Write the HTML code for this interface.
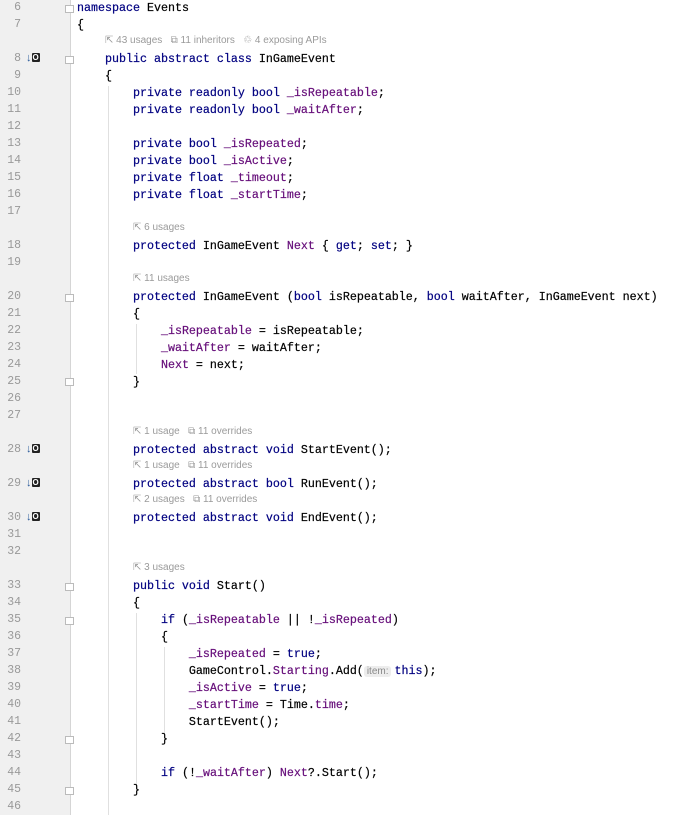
<!DOCTYPE html>
<html><head><meta charset="utf-8"><style>
html,body{margin:0;padding:0;background:#fff;width:692px;height:815px;overflow:hidden;position:relative}
.g{position:absolute;left:0;top:0;width:70px;height:815px;background:#f0f0f0;border-right:1px solid #d5d5d5}
.w{position:absolute;left:0;top:2px;width:692px;height:815px}
.r{position:absolute;left:0;height:17px;line-height:17px;white-space:pre;width:692px}
.n{position:absolute;left:0;width:21px;text-align:right;font:11.5px "Liberation Mono",monospace;color:#999}
.a{position:absolute;left:26px;font:bold 11px "Liberation Sans",sans-serif;color:#2a5a9a}
.a b{display:inline-block;background:#222;color:#fff;font-size:8px;line-height:9px;padding:0 1px;border-radius:1px;vertical-align:1px}
.c{position:absolute;left:77px;font:11.67px "Liberation Mono",monospace;color:#000;-webkit-text-stroke:0.2px}
.h{position:absolute;font:10px "Liberation Sans",sans-serif;color:#9a9a9a}
.k{color:#000080}.f{color:#660e7a}
.i{background:#ededed;color:#888;font:10px "Liberation Sans",sans-serif;border-radius:3px;padding:0 3px;margin-right:3px;-webkit-text-stroke:0}
.gd{position:absolute;width:1px;background:#e0e0e0}
.fm{position:absolute;left:65px;width:9px;height:8px;border:1px solid #bbb;background:#fff;box-sizing:border-box}
</style></head><body>
<div class="g"></div>
<div class="w">
<div class="gd" style="left:108px;top:84px;height:730px"></div>
<div class="gd" style="left:136px;top:322px;height:50px"></div>
<div class="gd" style="left:136px;top:611px;height:180px"></div>
<div class="gd" style="left:164px;top:645px;height:95px"></div>
<div class="fm" style="top:3px"></div>
<div class="fm" style="top:54px"></div>
<div class="fm" style="top:292px"></div>
<div class="fm" style="top:376px"></div>
<div class="fm" style="top:581px"></div>
<div class="fm" style="top:615px"></div>
<div class="fm" style="top:734px"></div>
<div class="fm" style="top:785px"></div>

<div class="r" style="top:-1px"><span class="n">6</span><span class="c"><span class="k">namespace</span> Events</span></div>
<div class="r" style="top:16px"><span class="n">7</span><span class="c">{</span></div>
<div class="r" style="top:33px"><span class="h" style="left:105px">⇱ 43 usages &nbsp;&nbsp;⧉ 11 inheritors &nbsp;&nbsp;♲ 4 exposing APIs</span></div>
<div class="r" style="top:50px"><span class="n">8</span><span class="a">↓<b>O</b></span><span class="c">    <span class="k">public abstract class</span> InGameEvent</span></div>
<div class="r" style="top:67px"><span class="n">9</span><span class="c">    {</span></div>
<div class="r" style="top:84px"><span class="n">10</span><span class="c">        <span class="k">private readonly bool</span> <span class="f">_isRepeatable</span>;</span></div>
<div class="r" style="top:101px"><span class="n">11</span><span class="c">        <span class="k">private readonly bool</span> <span class="f">_waitAfter</span>;</span></div>
<div class="r" style="top:118px"><span class="n">12</span></div>
<div class="r" style="top:135px"><span class="n">13</span><span class="c">        <span class="k">private bool</span> <span class="f">_isRepeated</span>;</span></div>
<div class="r" style="top:152px"><span class="n">14</span><span class="c">        <span class="k">private bool</span> <span class="f">_isActive</span>;</span></div>
<div class="r" style="top:169px"><span class="n">15</span><span class="c">        <span class="k">private float</span> <span class="f">_timeout</span>;</span></div>
<div class="r" style="top:186px"><span class="n">16</span><span class="c">        <span class="k">private float</span> <span class="f">_startTime</span>;</span></div>
<div class="r" style="top:203px"><span class="n">17</span></div>
<div class="r" style="top:220px"><span class="h" style="left:133px">⇱ 6 usages</span></div>
<div class="r" style="top:237px"><span class="n">18</span><span class="c">        <span class="k">protected</span> InGameEvent <span class="f">Next</span> { <span class="k">get</span>; <span class="k">set</span>; }</span></div>
<div class="r" style="top:254px"><span class="n">19</span></div>
<div class="r" style="top:271px"><span class="h" style="left:133px">⇱ 11 usages</span></div>
<div class="r" style="top:288px"><span class="n">20</span><span class="c">        <span class="k">protected</span> InGameEvent (<span class="k">bool</span> isRepeatable, <span class="k">bool</span> waitAfter, InGameEvent next)</span></div>
<div class="r" style="top:305px"><span class="n">21</span><span class="c">        {</span></div>
<div class="r" style="top:322px"><span class="n">22</span><span class="c">            <span class="f">_isRepeatable</span> = isRepeatable;</span></div>
<div class="r" style="top:339px"><span class="n">23</span><span class="c">            <span class="f">_waitAfter</span> = waitAfter;</span></div>
<div class="r" style="top:356px"><span class="n">24</span><span class="c">            <span class="f">Next</span> = next;</span></div>
<div class="r" style="top:373px"><span class="n">25</span><span class="c">        }</span></div>
<div class="r" style="top:390px"><span class="n">26</span></div>
<div class="r" style="top:407px"><span class="n">27</span></div>
<div class="r" style="top:424px"><span class="h" style="left:133px">⇱ 1 usage &nbsp;&nbsp;⧉ 11 overrides</span></div>
<div class="r" style="top:441px"><span class="n">28</span><span class="a">↓<b>O</b></span><span class="c">        <span class="k">protected abstract void</span> StartEvent();</span></div>
<div class="r" style="top:458px"><span class="h" style="left:133px">⇱ 1 usage &nbsp;&nbsp;⧉ 11 overrides</span></div>
<div class="r" style="top:475px"><span class="n">29</span><span class="a">↓<b>O</b></span><span class="c">        <span class="k">protected abstract bool</span> RunEvent();</span></div>
<div class="r" style="top:492px"><span class="h" style="left:133px">⇱ 2 usages &nbsp;&nbsp;⧉ 11 overrides</span></div>
<div class="r" style="top:509px"><span class="n">30</span><span class="a">↓<b>O</b></span><span class="c">        <span class="k">protected abstract void</span> EndEvent();</span></div>
<div class="r" style="top:526px"><span class="n">31</span></div>
<div class="r" style="top:543px"><span class="n">32</span></div>
<div class="r" style="top:560px"><span class="h" style="left:133px">⇱ 3 usages</span></div>
<div class="r" style="top:577px"><span class="n">33</span><span class="c">        <span class="k">public void</span> Start()</span></div>
<div class="r" style="top:594px"><span class="n">34</span><span class="c">        {</span></div>
<div class="r" style="top:611px"><span class="n">35</span><span class="c">            <span class="k">if</span> (<span class="f">_isRepeatable</span> || !<span class="f">_isRepeated</span>)</span></div>
<div class="r" style="top:628px"><span class="n">36</span><span class="c">            {</span></div>
<div class="r" style="top:645px"><span class="n">37</span><span class="c">                <span class="f">_isRepeated</span> = <span class="k">true</span>;</span></div>
<div class="r" style="top:662px"><span class="n">38</span><span class="c">                GameControl.<span class="f">Starting</span>.Add(<span class="i">item:</span><span class="k">this</span>);</span></div>
<div class="r" style="top:679px"><span class="n">39</span><span class="c">                <span class="f">_isActive</span> = <span class="k">true</span>;</span></div>
<div class="r" style="top:696px"><span class="n">40</span><span class="c">                <span class="f">_startTime</span> = Time.<span class="f">time</span>;</span></div>
<div class="r" style="top:713px"><span class="n">41</span><span class="c">                StartEvent();</span></div>
<div class="r" style="top:730px"><span class="n">42</span><span class="c">            }</span></div>
<div class="r" style="top:747px"><span class="n">43</span></div>
<div class="r" style="top:764px"><span class="n">44</span><span class="c">            <span class="k">if</span> (!<span class="f">_waitAfter</span>) <span class="f">Next</span>?.Start();</span></div>
<div class="r" style="top:781px"><span class="n">45</span><span class="c">        }</span></div>
<div class="r" style="top:798px"><span class="n">46</span></div>
</div>
</body></html>
